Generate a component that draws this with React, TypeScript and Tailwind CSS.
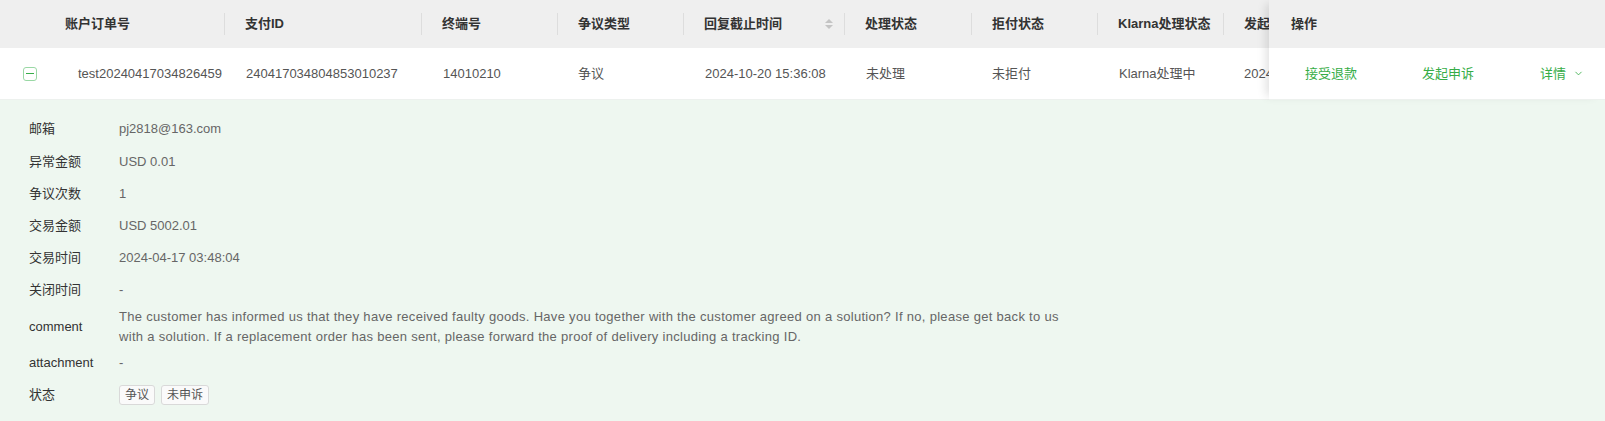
import { ChevronDown } from "lucide-react";

const COLUMNS = [
  { key: "order", title: "账户订单号", width: "w-[180px]", value: "test20240417034826459", pad: "pl-[34px]" },
  { key: "payId", title: "支付ID", width: "w-[197px]", value: "240417034804853010237", pad: "pl-[22px]" },
  { key: "terminal", title: "终端号", width: "w-[136px]", value: "14010210", pad: "pl-[22px]" },
  { key: "type", title: "争议类型", width: "w-[126px]", value: "争议", pad: "pl-[21px]" },
  { key: "deadline", title: "回复截止时间", width: "w-[161px]", value: "2024-10-20 15:36:08", pad: "pl-[22px]", sortable: true },
  { key: "handle", title: "处理状态", width: "w-[127px]", value: "未处理", pad: "pl-[22px]" },
  { key: "refuse", title: "拒付状态", width: "w-[126px]", value: "未拒付", pad: "pl-[21px]" },
  { key: "klarna", title: "Klarna处理状态", width: "w-[126px]", value: "Klarna处理中", pad: "pl-[22px]" },
  { key: "created", title: "发起时间", width: "w-[200px]", value: "2024-04-17 03:48:04", pad: "pl-[21px]" },
];

const DETAILS = [
  { label: "邮箱", value: "pj2818@163.com" },
  { label: "异常金额", value: "USD 0.01" },
  { label: "争议次数", value: "1" },
  { label: "交易金额", value: "USD 5002.01" },
  { label: "交易时间", value: "2024-04-17 03:48:04" },
  { label: "关闭时间", value: "-" },
];

const SortIcon = () => (
  <span className="flex flex-col items-center gap-[2px]">
    <svg width="8" height="4" viewBox="0 0 8 4">
      <path d="M4 0 L8 4 L0 4 Z" fill="#c4c4c4" />
    </svg>
    <svg width="8" height="4" viewBox="0 0 8 4">
      <path d="M0 0 L8 0 L4 4 Z" fill="#c4c4c4" />
    </svg>
  </span>
);

export default function App() {
  return (
    <div className="w-[1605px] h-[421px] overflow-hidden bg-white text-[13px] font-['Liberation_Sans','Noto_Sans_CJK_SC',sans-serif]">
      {/* Table head + row */}
      <div className="flex">
        <div className="flex-1 overflow-hidden">
          <div className="flex h-12 bg-[#efefef] font-bold text-[#333]">
            <div className="w-[44px] shrink-0" />
            {COLUMNS.map((col, i) => (
              <div key={col.key} className={`${col.width} shrink-0 flex items-center whitespace-nowrap`}>
                {i > 0 ? <span className="w-px h-[22px] bg-[#dddddd]" /> : <span className="w-px" />}
                <span className="ml-[20px]">{col.title}</span>
                {col.sortable && (
                  <span className="ml-auto mr-[11px]">
                    <SortIcon />
                  </span>
                )}
              </div>
            ))}
          </div>
          <div className="flex h-[52px] bg-white text-[#555] border-b border-[#edf1ee]">
            <div className="w-[44px] shrink-0 flex items-center pl-[23px]">
              <span className="w-[14px] h-[14px] rounded-[3px] border border-[#9ad8a5] flex items-center justify-center">
                <span className="w-[8px] h-[1.5px] bg-[#39ad4a]" />
              </span>
            </div>
            {COLUMNS.map((col) => (
              <div key={col.key} className={`${col.width} shrink-0 flex items-center whitespace-nowrap ${col.pad}`}>
                {col.value}
              </div>
            ))}
          </div>
        </div>

        {/* Fixed action column */}
        <div className="w-[336px] shrink-0 relative z-10 shadow-[-7px_0_9px_-4px_rgba(0,0,0,0.12)]">
          <div className="h-12 bg-[#efefef] flex items-center pl-[22px] font-bold text-[#333]">操作</div>
          <div className="h-[52px] bg-white flex items-center pl-[36px] text-[#36ad47] border-b border-[#edf1ee]">
            <span className="w-[117px]">接受退款</span>
            <span className="w-[118px]">发起申诉</span>
            <span className="flex items-center gap-[7px]">
              详情
              <ChevronDown size={11} strokeWidth={1.8} />
            </span>
          </div>
        </div>
      </div>

      {/* Expanded detail */}
      <div className="h-[321px] bg-[#eef7f0] pt-[13px] pl-[29px]">
        {DETAILS.map((d) => (
          <div key={d.label} className="flex h-[32.2px] items-center">
            <span className="w-[90px] text-[#333]">{d.label}</span>
            <span className="text-[#666]">{d.value}</span>
          </div>
        ))}
        <div className="flex h-[42px] items-center">
          <span className="w-[90px] text-[#333]">comment</span>
          <p className="w-[950px] leading-[20px] tracking-[0.3px] text-[#666]">
            The customer has informed us that they have received faulty goods. Have you together with the customer agreed on a solution? If no, please get back to us with a solution. If a replacement order has been sent, please forward the proof of delivery including a tracking ID.
          </p>
        </div>
        <div className="flex h-[29px] items-center">
          <span className="w-[90px] text-[#333]">attachment</span>
          <span className="text-[#666]">-</span>
        </div>
        <div className="flex h-[35px] items-center">
          <span className="w-[90px] text-[#333]">状态</span>
          <span className="flex gap-[6px]">
            <span className="h-[20px] px-[5px] flex items-center rounded-[3px] border border-[#d9d9d9] bg-[#fafafa] text-[12px] text-[#555]">争议</span>
            <span className="h-[20px] px-[5px] flex items-center rounded-[3px] border border-[#d9d9d9] bg-[#fafafa] text-[12px] text-[#555]">未申诉</span>
          </span>
        </div>
      </div>
    </div>
  );
}
